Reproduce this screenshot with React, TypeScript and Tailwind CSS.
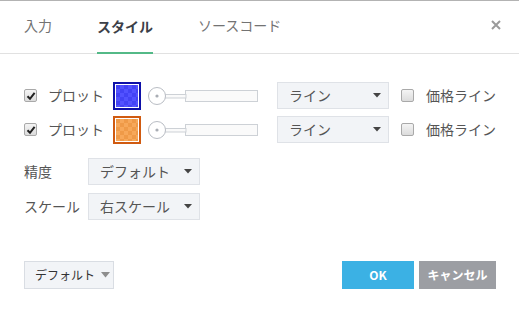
import React from "react";

const font = { fontFamily: '"Noto Sans CJK JP", "Noto Sans", sans-serif' };

function Check({ checked }: { checked: boolean }) {
  return (
    <div className="w-[13px] h-[13px] shrink-0 rounded-[2px] border border-[#a9a9a9] bg-gradient-to-b from-[#f4f4f4] to-[#dcdcdc] flex items-center justify-center">
      {checked && (
        <svg width="10" height="10" viewBox="0 0 10 10">
          <path d="M1.5 5.2 L4 7.8 L8.6 1.8" fill="none" stroke="#222" strokeWidth="2" />
        </svg>
      )}
    </div>
  );
}

function Swatch({ a, b, border, id }: { a: string; b: string; border: string; id: string }) {
  return (
    <svg width="28" height="28" viewBox="0 0 28 28" className="shrink-0">
      <defs>
        <pattern id={id} width="8" height="8" patternUnits="userSpaceOnUse" x="3" y="3">
          <rect width="8" height="8" fill={a} />
          <rect width="4" height="4" fill={b} />
          <rect x="4" y="4" width="4" height="4" fill={b} />
        </pattern>
      </defs>
      <rect x="1" y="1" width="26" height="26" fill="none" stroke={border} strokeWidth="2" />
      <rect x="2" y="2" width="24" height="24" fill="#fff" />
      <rect x="3" y="3" width="22" height="22" fill={`url(#${id})`} />
    </svg>
  );
}

function Slider() {
  return (
    <svg width="111" height="26" viewBox="0 0 111 26" className="shrink-0">
      <rect x="37.5" y="7.5" width="72" height="11" fill="#fafafa" stroke="#cdd1d6" />
      <rect x="17" y="11.5" width="21" height="3.5" fill="#fafafa" stroke="#cdd1d6" />
      <circle cx="9" cy="13" r="8.5" fill="#fff" stroke="#b9bdc4" />
      <circle cx="9" cy="13" r="1.6" fill="#a9adb4" />
    </svg>
  );
}

function Select({ label }: { label: string }) {
  return (
    <div className="w-[112px] h-[27px] shrink-0 bg-[#f2f4f7] border border-[#dfe2e7] flex items-center justify-between pl-[11px] pr-[7px] text-[14px] text-[#555] whitespace-nowrap">
      <span>{label}</span>
      <svg width="8" height="5" viewBox="0 0 8 5">
        <path d="M0 0 L8 0 L4 4.5 Z" fill="#444" />
      </svg>
    </div>
  );
}

function PlotRow({ a, b, border, id }: { a: string; b: string; border: string; id: string }) {
  return (
    <div className="flex items-center h-[27px] whitespace-nowrap">
      <Check checked />
      <span className="ml-[11px] w-[56px] shrink-0 text-[14px] text-[#555]">プロット</span>
      <div className="ml-[9px] shrink-0">
        <Swatch a={a} b={b} border={border} id={id} />
      </div>
      <div className="ml-[7px] shrink-0">
        <Slider />
      </div>
      <div className="ml-[18px] shrink-0">
        <Select label="ライン" />
      </div>
      <div className="ml-[12px] shrink-0">
        <Check checked={false} />
      </div>
      <span className="ml-[12px] shrink-0 text-[14px] text-[#555]">価格ライン</span>
    </div>
  );
}

export default function App() {
  return (
    <div style={font} className="w-[519px] h-[314px] bg-white border-t border-[#b3b3b3] flex flex-col">
      <div className="h-[53px] border-b border-[#e1e1e1] flex items-stretch pl-[24px] pr-[18px]">
        <div className="flex items-center text-[14px] text-[#737373] pb-[3px]">入力</div>
        <div className="ml-[45px] flex items-center text-[14px] font-bold text-[#3c4048] border-b-2 border-[#53b987] -mb-px">
          スタイル
        </div>
        <div className="ml-[45px] flex items-center text-[14px] text-[#737373] pb-[3px]">ソースコード</div>
        <div className="ml-auto flex items-center pb-[5px]">
          <svg width="10" height="10" viewBox="0 0 10 10">
            <path d="M1 1 L9 9 M9 1 L1 9" stroke="#9a9a9a" strokeWidth="2" />
          </svg>
        </div>
      </div>
      <div className="flex-1 flex flex-col px-[24px] pt-[28px]">
        <div className="flex flex-col gap-[7px]">
          <PlotRow a="#5252ff" b="#4343f5" border="#0e10a8" id="p1" />
          <PlotRow a="#f7a85a" b="#ef9a48" border="#d05a10" id="p2" />
        </div>
        <div className="mt-[15px] flex flex-col gap-[8px]">
          <div className="flex items-center h-[27px] whitespace-nowrap">
            <span className="w-[64px] shrink-0 text-[14px] text-[#555]">精度</span>
            <Select label="デフォルト" />
          </div>
          <div className="flex items-center h-[27px] whitespace-nowrap">
            <span className="w-[64px] shrink-0 text-[14px] text-[#555]">スケール</span>
            <Select label="右スケール" />
          </div>
        </div>
        <div className="mt-[41px] flex items-center whitespace-nowrap">
          <div className="w-[90px] h-[28px] bg-[#f2f4f7] border border-[#d9dde3] flex items-center pl-[10px] gap-[6px] text-[12px] text-[#333]">
            <span>デフォルト</span>
            <svg width="9" height="6" viewBox="0 0 9 6">
              <path d="M0 0 L9 0 L4.5 5.5 Z" fill="#8d8d8d" />
            </svg>
          </div>
          <div className="ml-auto w-[72px] h-[28px] bg-[#3bb1e4] flex items-center justify-center text-white text-[12px] font-bold">
            OK
          </div>
          <div className="ml-[5px] mr-[-1px] w-[77px] h-[28px] bg-[#9c9ea3] flex items-center justify-center text-white text-[12px] font-bold">
            キャンセル
          </div>
        </div>
      </div>
    </div>
  );
}
